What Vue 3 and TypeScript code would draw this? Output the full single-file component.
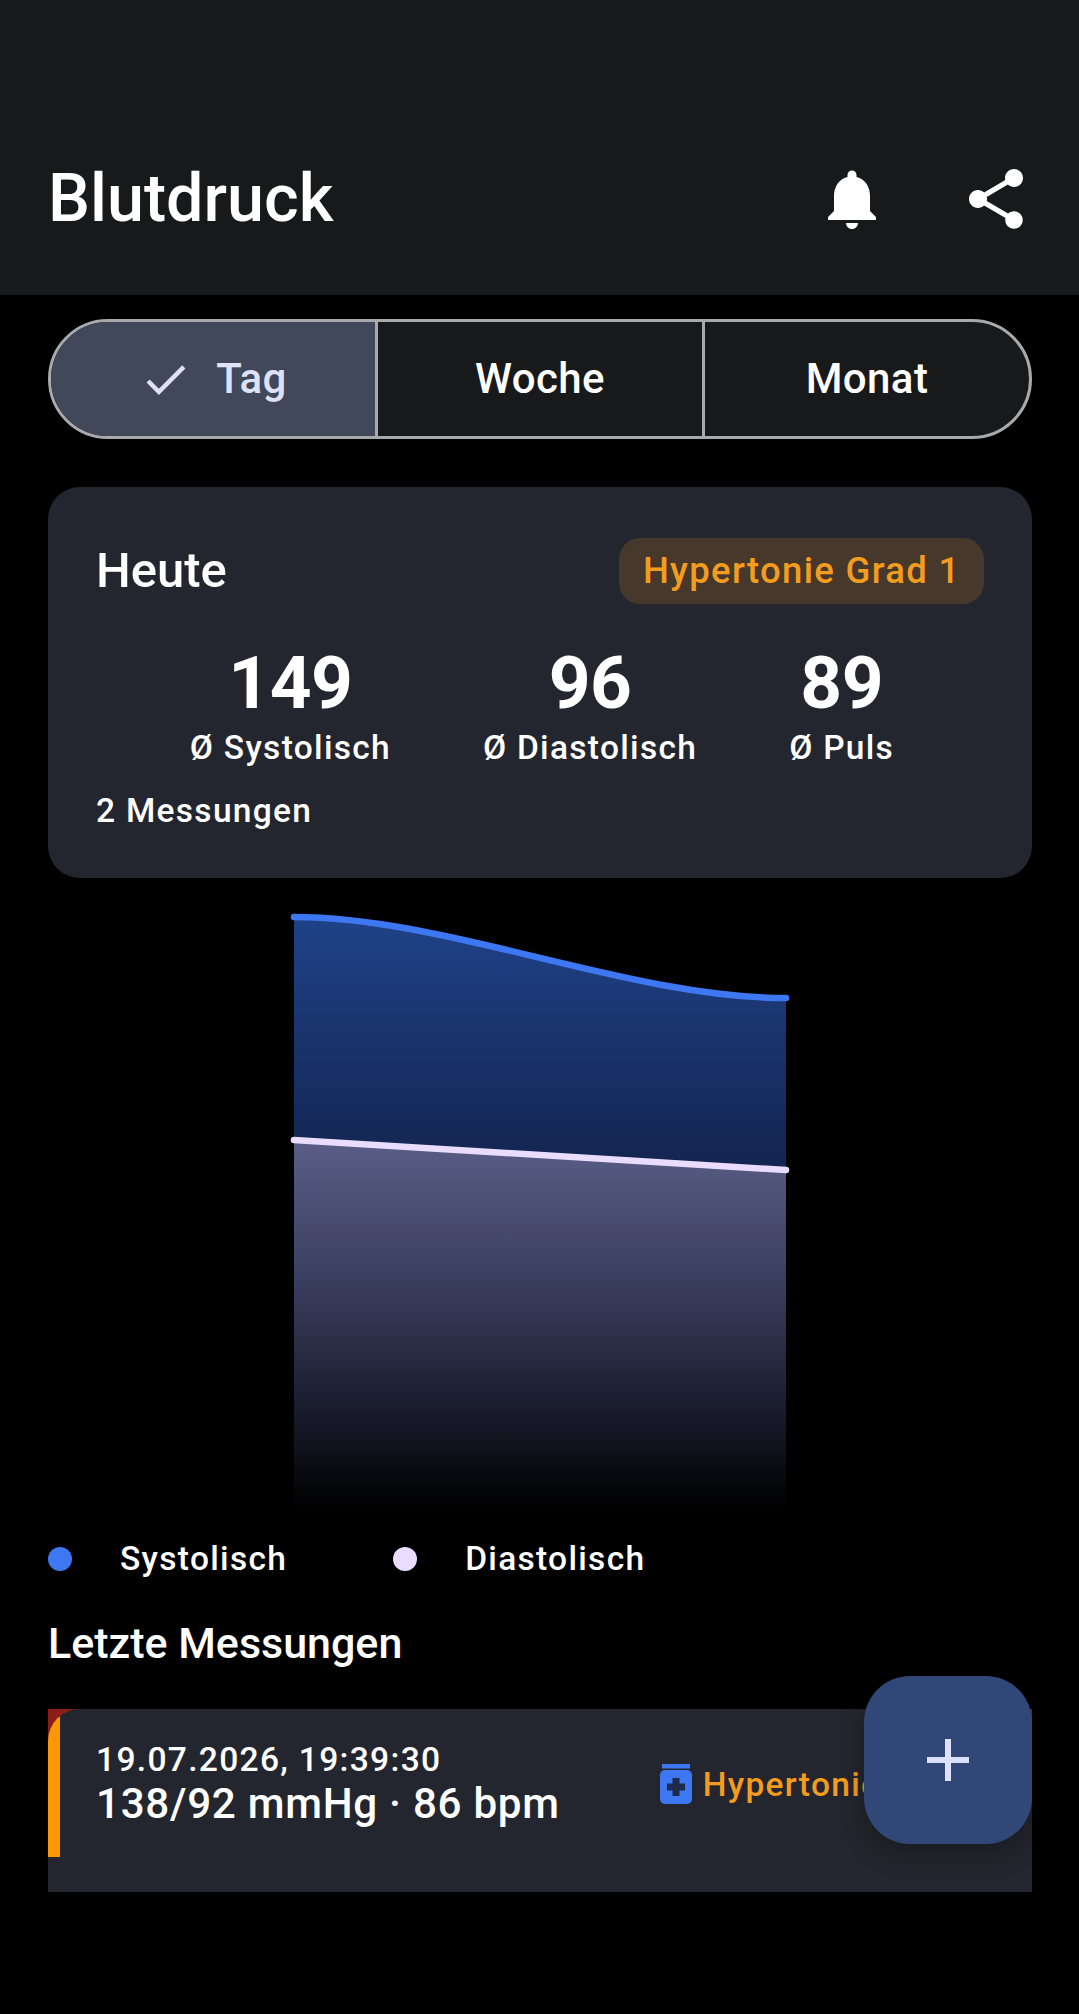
<script setup lang="ts">
const stats = [
  { value: '149', label: 'Ø Systolisch' },
  { value: '96', label: 'Ø Diastolisch' },
  { value: '89', label: 'Ø Puls' },
]
const ranges = ['Tag', 'Woche', 'Monat']
const selected = 'Tag'
</script>

<template>
  <div class="page">
    <header class="topbar">
      <h1>Blutdruck</h1>
      <div class="actions">
        <svg viewBox="0 0 24 24" width="72" height="72"><path fill="#fff" d="M12 22c1.1 0 2-.9 2-2h-4c0 1.1.9 2 2 2zm6-6v-5c0-3.07-1.63-5.64-4.5-6.32V4c0-.83-.67-1.5-1.5-1.5s-1.5.67-1.5 1.5v.68C7.64 5.36 6 7.92 6 11v5l-2 2v1h16v-1l-2-2z"/></svg>
        <svg viewBox="0 0 24 24" width="72" height="72"><path fill="#fff" d="M18 16.08c-.76 0-1.44.3-1.96.77L8.91 12.7c.05-.23.09-.46.09-.7s-.04-.47-.09-.7l7.05-4.11c.54.5 1.25.81 2.04.81 1.66 0 3-1.34 3-3s-1.34-3-3-3-3 1.34-3 3c0 .24.04.47.09.7L8.04 9.81C7.5 9.31 6.79 9 6 9c-1.66 0-3 1.34-3 3s1.34 3 3 3c.79 0 1.5-.31 2.04-.81l7.12 4.16c-.05.21-.08.43-.08.65 0 1.61 1.31 2.92 2.92 2.92s2.92-1.31 2.92-2.92-1.31-2.92-2.92-2.92z"/></svg>
      </div>
    </header>

    <main class="content">
      <div class="segments">
        <div v-for="r in ranges" :key="r" class="segment" :class="{ active: r === selected }">
          <svg v-if="r === selected" viewBox="0 0 24 24" width="53" height="53"><path fill="#dfe2f7" d="M9 16.17 4.83 12l-1.42 1.41L9 19 21 7l-1.41-1.41z"/></svg>
          <span>{{ r }}</span>
        </div>
      </div>

      <section class="summary">
        <div class="summary-head">
          <h2>Heute</h2>
          <span class="badge">Hypertonie Grad 1</span>
        </div>
        <div class="stats">
          <div v-for="s in stats" :key="s.label" class="stat">
            <strong>{{ s.value }}</strong>
            <span>{{ s.label }}</span>
          </div>
        </div>
        <p class="count">2 Messungen</p>
      </section>

      <svg class="chart" viewBox="0 0 984 641" width="984" height="641">
        <defs>
          <linearGradient id="sysFill" x1="0" y1="0" x2="0" y2="1">
            <stop offset="0" stop-color="#1f4288" />
            <stop offset="1" stop-color="#13244f" />
          </linearGradient>
          <linearGradient id="diaFill" x1="0" y1="0" x2="0" y2="1">
            <stop offset="0" stop-color="#5a5d87" />
            <stop offset="0.4" stop-color="#393d5c" />
            <stop offset="0.71" stop-color="#1b1e30" />
            <stop offset="1" stop-color="#000" />
          </linearGradient>
        </defs>
        <path fill="url(#sysFill)" d="M246 29C400 29 580 110 738 110V282L246 252Z" />
        <path fill="url(#diaFill)" d="M246 252L738 282V621H246Z" />
        <path fill="none" stroke="#3d78f2" stroke-width="6.5" stroke-linecap="round" d="M246 29C400 29 580 110 738 110" />
        <path fill="none" stroke="#e9dcff" stroke-width="6.5" stroke-linecap="round" d="M246 252L738 282" />
      </svg>

      <div class="legend">
        <div class="legend-item"><i class="dot sys"></i><span>Systolisch</span></div>
        <div class="legend-item"><i class="dot dia"></i><span>Diastolisch</span></div>
      </div>

      <h3 class="section-title">Letzte Messungen</h3>

      <div class="swipe">
        <div class="entry">
          <div class="bar"></div>
          <div class="entry-text">
            <div class="entry-date">19.07.2026, 19:39:30</div>
            <div class="entry-value">138/92 mmHg · 86 bpm</div>
          </div>
          <div class="entry-tag">
            <svg viewBox="0 0 32 40" width="32" height="40">
              <rect x="2" y="0" width="28" height="4.5" fill="#3d78f2" />
              <rect x="0" y="6" width="32" height="34" rx="5" fill="#3d78f2" />
              <path fill="#1e2a4a" d="M12.5 14h7v5.5H25v7h-5.5V32h-7v-5.5H7v-7h5.5z" />
            </svg>
            <span>Hypertonie Grad 1</span>
          </div>
        </div>
      </div>
    </main>

    <button class="fab" aria-label="Messung hinzufügen">
      <svg viewBox="0 0 42 42" width="42" height="42"><path fill="#dce1ff" d="M18 0h6v18h18v6H24v18h-6V24H0v-6h18z"/></svg>
    </button>
  </div>
</template>

<style>
html, body {
  margin: 0;
  background: #000;
}
</style>

<style scoped>
.page {
  position: relative;
  width: 1079px;
  height: 2014px;
  overflow: hidden;
  background: #000;
  color: #fff;
  font-family: Roboto, "Noto Sans", sans-serif;
}

.topbar {
  height: 295px;
  box-sizing: border-box;
  padding: 147px 47px 0 48px;
  background: #18191b;
  display: flex;
  justify-content: space-between;
  align-items: flex-start;
}

.topbar h1 {
  margin: 0;
  font-size: 66.5px;
  line-height: 102px;
  font-weight: 500;
}

.actions {
  display: flex;
  gap: 72px;
  padding-top: 16px;
}

.content {
  padding: 24px 47px 0 48px;
}

.segments {
  display: flex;
  height: 120px;
  box-sizing: border-box;
  border: 3px solid #a8a9ad;
  border-radius: 60px;
  overflow: hidden;
  background: #18191b;
}

.segment {
  flex: 1;
  display: flex;
  align-items: center;
  justify-content: center;
  gap: 24px;
  font-size: 42px;
  font-weight: 500;
  letter-spacing: 0.4px;
  border-left: 3px solid #a8a9ad;
}

.segment span {
  margin-bottom: 2px;
}

.segment:first-child {
  border-left: none;
}

.segment.active {
  background: #414859;
  color: #dfe2f7;
}

.summary {
  margin-top: 48px;
  height: 391px;
  box-sizing: border-box;
  padding: 51px 48px 0;
  background: #24262f;
  border-radius: 32px;
}

.summary-head {
  display: flex;
  justify-content: space-between;
  align-items: center;
}

.summary-head h2 {
  margin: 0 0 2px;
  font-size: 49px;
  font-weight: 500;
}

.badge {
  height: 66px;
  line-height: 66px;
  padding: 0 23.5px;
  border-radius: 21px;
  background: #46382a;
  color: #f39c1d;
  font-size: 36.5px;
  font-weight: 500;
  letter-spacing: 1.3px;
}

.stats {
  display: flex;
  justify-content: center;
  gap: 92px;
  padding-left: 4px;
  margin-top: 41px;
}

.stat {
  display: flex;
  flex-direction: column;
  align-items: center;
}

.stat strong {
  font-size: 73px;
  line-height: 76px;
  font-weight: 700;
  letter-spacing: -0.5px;
}

.stat span {
  margin-top: 6px;
  font-size: 33.5px;
  font-weight: 500;
  letter-spacing: 1.3px;
  line-height: 42px;
}

.count {
  margin: 22px 0 0;
  font-size: 33.5px;
  font-weight: 500;
  letter-spacing: 1.3px;
}

.chart {
  display: block;
  margin-top: 10px;
}

.legend {
  display: flex;
  gap: 106px;
  margin-top: 10px;
}

.legend-item {
  display: flex;
  align-items: center;
  gap: 48px;
  font-size: 33.5px;
  font-weight: 500;
  letter-spacing: 1.3px;
}

.dot {
  width: 24px;
  height: 24px;
  border-radius: 50%;
}

.dot.sys { background: #3d78f2; }
.dot.dia { background: #e9dcff; }

.section-title {
  margin: 37px 0 0;
  font-size: 43px;
  font-weight: 500;
  line-height: 56px;
}

.swipe {
  margin-top: 38px;
  height: 183px;
  background: linear-gradient(#8c1d18 0 60px, #24262f 60px);
  overflow: hidden;
}

.entry {
  position: relative;
  height: 183px;
  box-sizing: border-box;
  display: flex;
  align-items: center;
  padding: 32px 0 63px 48px;
  background: #24262f;
  border-radius: 32px 32px 0 0;
  overflow: hidden;
}

.bar {
  position: absolute;
  left: 0;
  top: 0;
  width: 12px;
  height: 148px;
  background: #ff9800;
}

.entry-date {
  font-size: 33.6px;
  line-height: 38px;
  letter-spacing: 1.3px;
  font-weight: 500;
}

.entry-value {
  font-size: 42.2px;
  line-height: 50px;
  letter-spacing: 0.7px;
  font-weight: 500;
}

.entry-tag {
  display: flex;
  align-items: center;
  gap: 11px;
  margin: 0 0 2px 100px;
  color: #f39c1d;
  font-size: 33.5px;
  font-weight: 500;
  letter-spacing: 1.3px;
  white-space: nowrap;
}

.fab {
  position: absolute;
  left: 864px;
  top: 1676px;
  width: 168px;
  height: 168px;
  padding: 0;
  border: none;
  border-radius: 46px;
  background: #304778;
  display: flex;
  align-items: center;
  justify-content: center;
  box-shadow: 0 10px 24px rgba(0, 0, 0, 0.3);
}
</style>
